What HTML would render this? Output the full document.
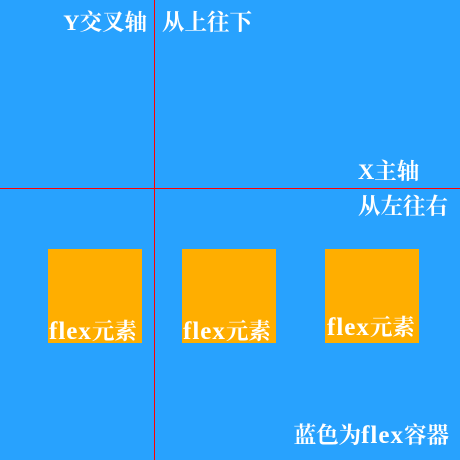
<!DOCTYPE html>
<html><head><meta charset="utf-8"><style>
body{margin:0;width:460px;height:460px;background:#28a2fe;position:relative;overflow:hidden;font-family:"Liberation Serif","Noto Serif CJK SC",serif;font-weight:bold;color:#fff;font-size:22.5px}
.t{position:absolute;line-height:22px;white-space:nowrap}
.f{font-size:25px;letter-spacing:1px}
.b{position:absolute;width:94px;height:94px;background:#ffae00;top:249px}
.v{position:absolute;left:154px;top:0;width:1px;height:460px;background:#f00}
.h{position:absolute;left:0;top:188px;width:460px;height:1px;background:#f00}
</style></head><body>
<div class="b" style="left:48px"></div>
<div class="b" style="left:182px"></div>
<div class="b" style="left:325px"></div>
<div class="t" style="left:49px;top:321px"><span class="f">flex</span>元素</div>
<div class="t" style="left:183px;top:321px"><span class="f">flex</span>元素</div>
<div class="t" style="left:327px;top:317px"><span class="f">flex</span>元素</div>
<div class="v"></div><div class="h"></div>
<div class="t" style="right:313px;top:12px">Y交叉轴</div>
<div class="t" style="left:162px;top:12px">从上往下</div>
<div class="t" style="left:358px;top:161px">X主轴</div>
<div class="t" style="left:358px;top:196px">从左往右</div>
<div class="t" style="right:11px;top:425px">蓝色为<span class="f">flex</span>容器</div>
</body></html>
